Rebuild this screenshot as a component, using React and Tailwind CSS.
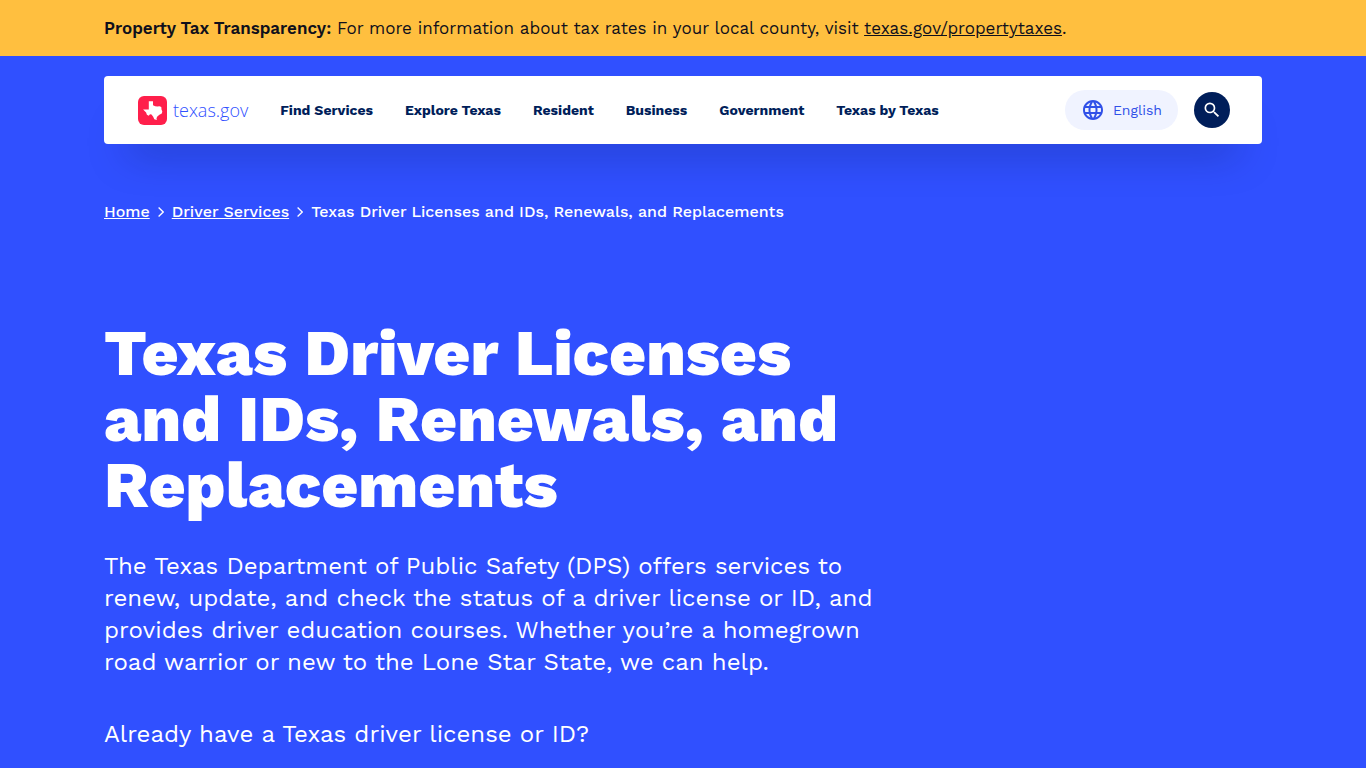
import React from 'react'
import { MdLanguage, MdSearch } from 'react-icons/md'

const navLinks = [
  { label: 'Find Services', href: '#find-services' },
  { label: 'Explore Texas', href: '#explore-texas' },
  { label: 'Resident', href: '#resident' },
  { label: 'Business', href: '#business' },
  { label: 'Government', href: '#government' },
  { label: 'Texas by Texas', href: '#texas-by-texas' }
]

const crumbs = [
  { label: 'Home', href: '#home' },
  { label: 'Driver Services', href: '#driver-services' }
]

function Logo() {
  return (
    <a href="#home" className="flex items-center gap-1.5 text-[#3050ff]">
      <svg viewBox="0 0 29 29" className="h-[29px] w-[29px]" aria-hidden="true">
        <rect width="29" height="29" rx="6" fill="#ff1f4b" />
        <path
          fill="#fff"
          d="M10.800 5.300h4.200v4l2.200.9 2.200.2 2-.2 1.900.7.200 2.700.8 2-.5 1.900-2.400 1.200-2.100 1.800-.8 1.700.3 1.800-2.500-.7-1.100-2.500-1.700-2.300-1.500-.2-1.300 1.400-1.800-1-.8-2.100-3-3h5.700z"
        />
      </svg>
      <span className="font-['Open_Sans',sans-serif] text-lg font-light">texas.gov</span>
    </a>
  )
}

function Chevron() {
  return (
    <svg viewBox="0 0 6 12" className="h-3 w-1.5" fill="none" stroke="currentColor" strokeWidth="1.3" aria-hidden="true">
      <path d="M.6 1.500 5.200 6 .6 10.500" />
    </svg>
  )
}

export default function App() {
  return (
    <div className="min-h-screen bg-[#3050ff] font-['Work_Sans',Inter,sans-serif] text-white">
      {/* Alert banner */}
      <div className="bg-[#ffbf3f] px-6 py-4 text-[17px] leading-6 text-[#10101c] lg:px-[104px]">
        <p>
          <strong className="font-semibold">Property Tax Transparency:</strong>{' '}
          For more information about tax rates in your local county, visit{' '}
          <a href="#propertytaxes" className="underline">texas.gov/propertytaxes</a>.
        </p>
      </div>

      {/* Header */}
      <header className="px-6 pt-5 lg:px-[104px]">
        <div className="flex items-center justify-between rounded bg-white py-3.5 pr-8 pl-[34px] shadow-[0_32px_40px_-24px_rgba(0,20,60,0.35)]">
          <div className="flex items-center gap-8">
            <Logo />
            <nav aria-label="Main">
              <ul className="flex items-center gap-8">
                {navLinks.map((link) => (
                  <li key={link.label}>
                    <a href={link.href} className="text-sm font-bold whitespace-nowrap text-[#001e5a]">
                      {link.label}
                    </a>
                  </li>
                ))}
              </ul>
            </nav>
          </div>
          <div className="flex items-center gap-4">
            <button type="button" className="flex h-10 items-center gap-2 rounded-full bg-[#f0f3ff] px-4 text-sm text-[#3050e8]">
              <MdLanguage className="h-6 w-6" />
              English
            </button>
            <button
              type="button"
              aria-label="Search"
              className="flex h-9 w-9 items-center justify-center rounded-full bg-[#001e5a]"
            >
              <MdSearch className="h-5 w-5" />
            </button>
          </div>
        </div>
      </header>

      <main className="px-6 pt-14 lg:px-[104px]">
        {/* Breadcrumb */}
        <nav aria-label="Breadcrumb">
          <ol className="flex flex-wrap items-center gap-2 text-base leading-6 font-medium">
            {crumbs.map((crumb) => (
              <li key={crumb.label} className="flex items-center gap-2">
                <a href={crumb.href} className="underline">{crumb.label}</a>
                <Chevron />
              </li>
            ))}
            <li>Texas Driver Licenses and IDs, Renewals, and Replacements</li>
          </ol>
        </nav>

        {/* Hero */}
        <div className="max-w-[780px] pt-24">
          <h1 className="text-[64px] leading-[66px] font-extrabold">
            Texas Driver Licenses and IDs, Renewals, and Replacements
          </h1>
          <p className="mt-8 text-2xl leading-8">
            The Texas Department of Public Safety (DPS) offers services to renew, update, and check the status of a
            driver license or ID, and provides driver education courses. Whether you’re a homegrown road warrior or
            new to the Lone Star State, we can help.
          </p>
          <p className="mt-10 text-2xl leading-8">Already have a Texas driver license or ID?</p>
        </div>
      </main>
    </div>
  )
}
